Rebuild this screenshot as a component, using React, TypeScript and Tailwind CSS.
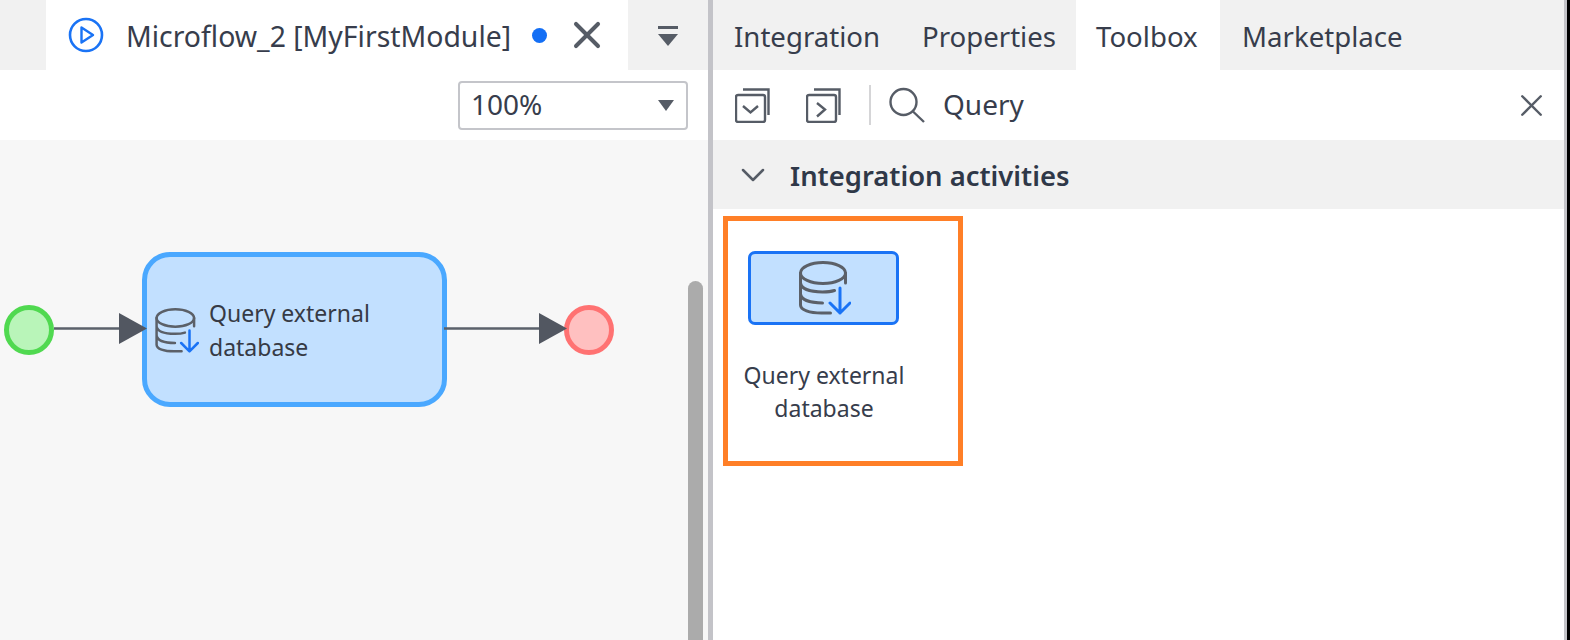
import { ChevronDown, X } from 'lucide-react';

const FONT = "font-['Noto_Sans','Open_Sans',sans-serif]";

function DatabaseArrow({ className }: { className: string }) {
  return (
    <svg viewBox="0 0 52 54" fill="none" className={className}>
      <ellipse cx="24" cy="12" rx="22.5" ry="10.5" stroke="#5b6068" strokeWidth="3" />
      <path d="M1.5 12v32c0 5 9 8 21 8h9M1.5 22c1 6 10 9 22 9 5 0 9-.5 12-1.5M1.5 33c1 6 10 9 22 9M46.5 12v10" stroke="#5b6068" strokeWidth="3" strokeLinecap="round" />
      <path d="M41 27v25M31 42l10 10 10-10" stroke="#1a73f5" strokeWidth="3" strokeLinecap="round" strokeLinejoin="round" />
    </svg>
  );
}

function StackIcon({ dir }: { dir: 'down' | 'right' }) {
  return (
    <svg viewBox="0 0 35 35" fill="none" className="w-[35px] h-[35px]">
      <path d="M8 1.5h25.5V27" stroke="#565c66" strokeWidth="2.4" />
      <rect x="1" y="7" width="29" height="27" rx="2" stroke="#565c66" strokeWidth="2.4" />
      {dir === 'down' ? (
        <path d="M8 18l7.5 6.5L23 18" stroke="#565c66" strokeWidth="2.4" />
      ) : (
        <path d="M11 15l8 6.5-8 7" stroke="#565c66" strokeWidth="2.4" />
      )}
    </svg>
  );
}

function Canvas() {
  return (
    <div className="relative flex-1 bg-[#f7f7f7] overflow-hidden">
      <div className="absolute left-[4px] top-[165px] w-[50px] h-[50px] rounded-full border-[5px] border-[#50d950] bg-[#b9f5b9]" />
      <div className="absolute left-[142px] top-[112px] w-[305px] h-[155px] rounded-[28px] border-[5px] border-[#4aa8ff] bg-[#c2e0ff] flex">
        <DatabaseArrow className="w-[44px] h-[45px] ml-[8px] mt-[51px] shrink-0" />
        <div className="ml-[10px] mt-[39px] text-[23px] leading-[34px] text-[#363a45]">
          Query external
          <br />
          database
        </div>
      </div>
      <div className="absolute left-[564px] top-[165px] w-[50px] h-[50px] rounded-full border-[5px] border-[#ff7272] bg-[#ffc0c0]" />
      <svg className="absolute left-0 top-0 w-[707px] h-[500px]" fill="none">
        <path d="M54 188.5h66M444 188.5h96" stroke="#5b616b" strokeWidth="2.6" />
        <path d="M119 173l28 15.5-28 15.5z" fill="#525761" />
        <path d="M539 173l28 15.5-28 15.5z" fill="#525761" />
      </svg>
      <div className="absolute left-[688px] top-[141px] w-[15px] h-[360px] rounded-t-full bg-[#ababab]" />
    </div>
  );
}

function LeftPane() {
  return (
    <div className="w-[708px] shrink-0 flex flex-col">
      <div className="h-[70px] flex bg-[#f1f1f1]">
        <div className="ml-[46px] w-[582px] bg-white flex items-center text-[#373d4c]">
          <svg viewBox="0 0 36 36" fill="none" className="ml-[22px] w-[36px] h-[36px] shrink-0">
            <circle cx="18" cy="18" r="16" stroke="#1a73f5" strokeWidth="2.6" />
            <path d="M13.5 10.5l11.5 7.5-11.5 7.5z" stroke="#1a73f5" strokeWidth="2.4" strokeLinejoin="round" />
          </svg>
          <span className="ml-[22px] pt-[2px] text-[28.4px] whitespace-nowrap">Microflow_2 [MyFirstModule]</span>
          <span className="ml-[21px] w-[15px] h-[15px] rounded-full bg-[#146ff5] shrink-0" />
          <X className="ml-[18px] w-[44px] h-[44px] text-[#565c66] shrink-0" strokeWidth={2.2} />
        </div>
        <div className="flex-1 flex flex-col items-center pt-[26px]">
          <div className="w-[20px] h-[3px] bg-[#565c66]" />
          <div className="mt-[5px] w-0 h-0 border-x-[10px] border-x-transparent border-t-[12px] border-t-[#565c66]" />
        </div>
      </div>
      <div className="h-[70px] bg-white flex items-center justify-end pr-[20px]">
        <div className="w-[230px] h-[49px] rounded-[4px] border-2 border-[#c4c5ca] flex items-center justify-between pl-[11px] pr-[12px] text-[28px] text-[#373d4c]">
          <span className="mt-[-2px]">100%</span>
          <div className="w-0 h-0 border-x-[8px] border-x-transparent border-t-[11px] border-t-[#565c66]" />
        </div>
      </div>
      <Canvas />
    </div>
  );
}

function RightPane() {
  return (
    <div className="flex-1 flex flex-col bg-white">
      <div className="h-[70px] flex text-[27.6px] text-[#373d4c] bg-[#f1f1f1]">
        <div className="w-[152px] pl-[21px] pt-[16px]">Integration</div>
        <div className="w-[211px] pl-[57px] pt-[16px]">Properties</div>
        <div className="w-[144px] pl-[20px] pt-[16px] bg-white">Toolbox</div>
        <div className="pl-[22px] pt-[16px]">Marketplace</div>
      </div>
      <div className="h-[70px] flex items-center pl-[22px] pr-[14px] text-[#373d4c]">
        <StackIcon dir="down" />
        <div className="ml-[36px]">
          <StackIcon dir="right" />
        </div>
        <div className="ml-[28px] w-[2px] h-[40px] bg-[#d5d5d7]" />
        <svg viewBox="0 0 36 36" fill="none" className="ml-[18px] w-[36px] h-[36px]">
          <circle cx="14.5" cy="15" r="13" stroke="#565c66" strokeWidth="2.4" />
          <path d="M24 24.5l11 10.5" stroke="#565c66" strokeWidth="2.4" />
        </svg>
        <span className="ml-[18px] mt-[-2px] text-[28px]">Query</span>
        <X className="ml-auto w-[37px] h-[37px] text-[#565c66]" strokeWidth={1.6} />
      </div>
      <div className="h-[69px] bg-[#f1f1f1] flex items-center pl-[20px] text-[#2f3848]">
        <ChevronDown className="w-[40px] h-[40px] text-[#565c66] shrink-0" strokeWidth={1.5} />
        <span className="ml-[17px] pt-[2px] text-[27.4px] font-semibold">Integration activities</span>
      </div>
      <div className="flex-1 pt-[7px] pl-[10px]">
        <div className="w-[240px] h-[250px] border-[5px] border-[#ff7f27] flex flex-col pl-[15px] pt-[30px]">
          <div className="w-[151px] h-[74px] ml-[5px] rounded-[7px] border-[3px] border-[#1a73f5] bg-[#c2e0ff] flex items-center justify-center">
            <DatabaseArrow className="w-[52px] h-[54px] ml-[3px]" />
          </div>
          <div className="mt-[34px] w-[162px] text-center text-[23px] leading-[33px] text-[#373d4c] whitespace-nowrap">
            Query external
            <br />
            database
          </div>
        </div>
      </div>
    </div>
  );
}

export default function App() {
  return (
    <div className={`w-[1570px] h-[640px] overflow-hidden flex bg-white ${FONT}`}>
      <LeftPane />
      <div className="w-[5px] shrink-0 bg-[#c3c3c8]" />
      <div className="w-[851px] shrink-0 flex">
        <RightPane />
      </div>
      <div className="w-[3px] shrink-0 bg-[#c3c3c8]" />
      <div className="flex-1 bg-black" />
    </div>
  );
}
